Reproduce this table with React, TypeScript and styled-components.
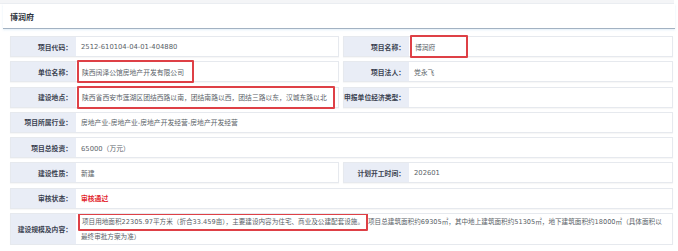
import styled, { createGlobalStyle } from "styled-components";

const GlobalStyle = createGlobalStyle`
  body {
    margin: 0;
    background: #ffffff;
    font-family: "DejaVu Sans", "Noto Sans CJK SC", sans-serif;
  }
`;

type Field = {
  label: string;
  value?: string;
  full?: boolean;
  mark?: number;
  status?: boolean;
};

const fields: Field[] = [
  { label: "项目代码：", value: "2512-610104-04-01-404880" },
  { label: "项目名称：", value: "博润府", mark: 58 },
  { label: "单位名称：", value: "陕西阔泽公馆房地产开发有限公司", mark: 117 },
  { label: "项目法人：", value: "党永飞" },
  {
    label: "建设地点：",
    value: "陕西省西安市莲湖区团结西路以南，团结南路以西，团结三路以东，汉城东路以北",
    mark: 258,
  },
  { label: "申报单位经济类型：", value: "" },
  { label: "项目所属行业：", value: "房地产业-房地产业-房地产开发经营-房地产开发经营", full: true },
  { label: "项目总投资：", value: "65000（万元）", full: true },
  { label: "建设性质：", value: "新建" },
  { label: "计划开工时间：", value: "202601" },
  { label: "审核状态：", value: "审核通过", full: true, status: true },
];

export default function App() {
  return (
    <>
      <GlobalStyle />
      <TopStrip />
      <Card>
        <CardHeader>博润府</CardHeader>
        <FieldGrid>
          {fields.map((f) => (
            <Row key={f.label} $full={f.full}>
              <Label>{f.label}</Label>
              <Value $status={f.status}>
                {f.mark ? <Mark $w={f.mark}>{f.value}</Mark> : f.value}
              </Value>
            </Row>
          ))}
          <Row $full $tall>
            <Label>建设规模及内容：</Label>
            <LongValue>
              <InlineMark>
                项目用地面积22305.97平方米（折合33.459亩），主要建设内容为住宅、商业及公建配套设施。
              </InlineMark>
              项目总建筑面积约69305㎡，其中地上建筑面积约51305㎡，地下建筑面积约18000㎡（具体面积以
              <br />
              最终审批方案为准）
            </LongValue>
          </Row>
        </FieldGrid>
      </Card>
    </>
  );
}

const TopStrip = styled.div`
  height: 3px;
  margin: 0 4px 0 0;
  background: #f4f5f7;
  border-bottom: 1px solid #eceef1;
`;

const Card = styled.div`
  margin: 0 3px;
  background: #ffffff;
`;

const CardHeader = styled.h2`
  margin: 0;
  height: 24px;
  padding: 0 7px;
  display: flex;
  align-items: center;
  font-size: 8px;
  font-weight: bold;
  color: #2f3540;
  border-bottom: 1px solid #a3b2c2;
  box-shadow: 0 1px 2px rgba(170, 205, 235, 0.35);
`;

const FieldGrid = styled.div`
  display: grid;
  grid-template-columns: 329px 330px;
  column-gap: 4px;
  row-gap: 4.3px;
  padding: 7px 2px 0 7px;
`;

const Row = styled.div<{ $full?: boolean; $tall?: boolean }>`
  grid-column: ${(p) => (p.$full ? "1 / -1" : "auto")};
  display: flex;
  height: ${(p) => (p.$tall ? "32px" : "21px")};
  border: 1px solid #e6e9ee;
  box-sizing: border-box;
  background: #ffffff;
  box-shadow: 0 1px 1px rgba(0, 0, 0, 0.03);
`;

const Label = styled.div`
  flex: 0 0 65px;
  display: flex;
  align-items: center;
  justify-content: flex-end;
  padding-right: 4px;
  box-sizing: border-box;
  background: #e9edf6;
  font-size: 6.8px;
  font-weight: bold;
  color: #3a4150;
  white-space: nowrap;
`;

const Value = styled.div<{ $status?: boolean }>`
  flex: 1;
  display: flex;
  align-items: center;
  padding-left: 5px;
  font-size: 6.8px;
  color: ${(p) => (p.$status ? "#e3262d" : "#5a5f68")};
  font-weight: ${(p) => (p.$status ? "bold" : "normal")};
  white-space: nowrap;
`;

const Mark = styled.span<{ $w: number }>`
  align-self: stretch;
  display: flex;
  align-items: center;
  width: ${(p) => p.$w}px;
  box-sizing: border-box;
  margin: -2px 0 -2px -4px;
  padding-left: 3px;
  border: 2px solid #de4046;
  border-radius: 1px;
`;

const LongValue = styled.div`
  flex: 1;
  padding: 1px 0 0 5px;
  font-size: 6.6px;
  line-height: 15px;
  color: #5a5f68;
  white-space: nowrap;
  overflow: hidden;
`;

const InlineMark = styled.span`
  margin-left: -3px;
  padding: 3px 2px;
  border: 2px solid #de4046;
  border-radius: 1px;
`;
